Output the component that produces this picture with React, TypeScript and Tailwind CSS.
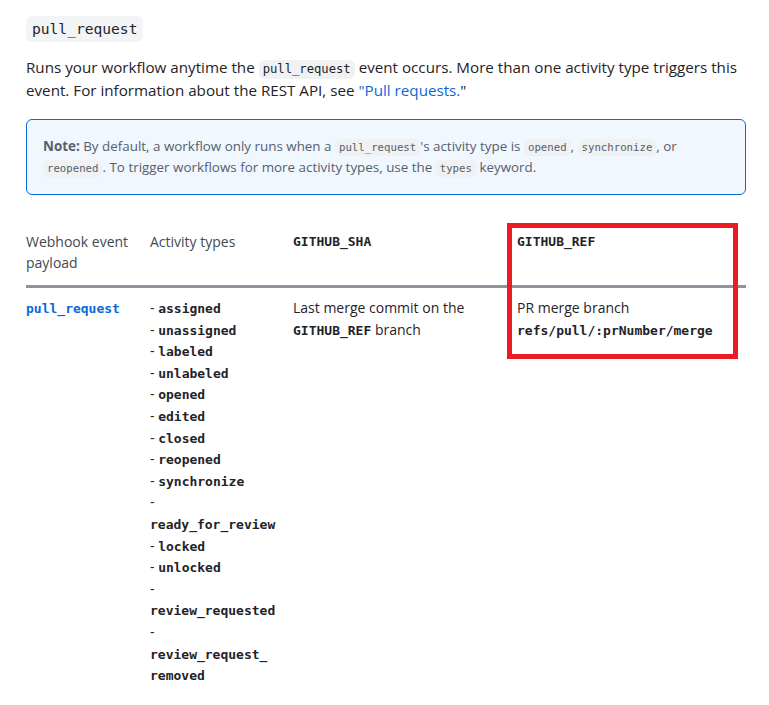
import React from 'react'

const mono = "font-['DejaVu_Sans_Mono',monospace]"

const Code = ({ children, className = '' }: { children: React.ReactNode; className?: string }) => (
  <code className={`${mono} inline-block rounded-[6px] bg-[#eff1f3] px-[4px] ${className}`}>{children}</code>
)

const activity: { name: string; split?: string[] }[] = [
  { name: 'assigned' },
  { name: 'unassigned' },
  { name: 'labeled' },
  { name: 'unlabeled' },
  { name: 'opened' },
  { name: 'edited' },
  { name: 'closed' },
  { name: 'reopened' },
  { name: 'synchronize' },
  { name: 'ready_for_review', split: ['ready_for_review'] },
  { name: 'locked' },
  { name: 'unlocked' },
  { name: 'review_requested', split: ['review_requested'] },
  { name: 'review_request_removed', split: ['review_request_', 'removed'] },
]

const Line = ({ children }: { children: React.ReactNode }) => (
  <div className="h-[21.6px] leading-[21.6px] whitespace-nowrap">{children}</div>
)

const Mono = ({ children, className = '' }: { children: React.ReactNode; className?: string }) => (
  <span className={`${mono} font-bold text-[13px] leading-[21.6px] ${className}`}>{children}</span>
)

export default function App() {
  return (
    <div className="relative w-[769px] h-[705px] bg-white font-['Open_Sans',sans-serif] text-[#1f2328] overflow-hidden">
      <div className="pl-[26px] pr-[23px] pt-[16px]">
        {/* event name */}
        <div className={`inline-block ${mono} text-[14.6px] h-[26px] leading-[26px] px-[6px] rounded-[6px] bg-[#f3f4f6]`}>
          pull_request
        </div>

        <p className="mt-[14px] text-[15.2px] leading-[22px]">
          Runs your workflow anytime the <Code className="text-[12.2px] leading-[19px]">pull_request</Code> event occurs. More
          than one activity type triggers this event. For information about the REST API, see{' '}
          <span className="text-[#0969da]">"Pull requests.</span>"
        </p>

        {/* note */}
        <div className="mt-[18px] h-[76px] rounded-[6px] border border-[#0969da] bg-[#f0f7ff] px-[16px] pt-[16px] text-[13.4px] leading-[21px] text-[#57606a]">
          <b className="font-bold">Note:</b> By default, a workflow only runs when a{' '}
          <Code className="text-[10.7px] leading-[17px] bg-[#e5e9ee]">pull_request</Code>'s activity type is{' '}
          <Code className="text-[10.7px] leading-[17px] bg-[#e5e9ee]">opened</Code>,{' '}
          <Code className="text-[10.7px] leading-[17px] bg-[#e5e9ee]">synchronize</Code>, or{' '}
          <Code className="text-[10.7px] leading-[17px] bg-[#e5e9ee]">reopened</Code>. To trigger workflows for more activity
          types, use the <Code className="text-[10.7px] leading-[17px] bg-[#e5e9ee]">types</Code> keyword.
        </div>

        {/* table */}
        <div className="mt-[26px]">
          <div className="grid grid-cols-[124px_143px_224px_229px] border-b-[3px] border-[#8c959f] pt-[10px] pb-[12px] text-[14px] leading-[21px]">
            <div className="text-[#424a53] pr-[16px]">Webhook event payload</div>
            <div className="text-[#424a53]">Activity types</div>
            <div className={`${mono} font-bold text-[13px]`}>GITHUB_SHA</div>
            <div className={`${mono} font-bold text-[13px]`}>GITHUB_REF</div>
          </div>
          <div className="grid grid-cols-[124px_143px_224px_229px] pt-[9px] text-[14px] leading-[21.6px]">
            <Line>
              <Mono className="text-[#0969da]">pull_request</Mono>
            </Line>
            <div>
              {activity.map((a) =>
                a.split ? (
                  <div key={a.name}>
                    <Line>-</Line>
                    {a.split.map((s) => (
                      <Line key={s}>
                        <Mono>{s}</Mono>
                      </Line>
                    ))}
                  </div>
                ) : (
                  <Line key={a.name}>
                    - <Mono>{a.name}</Mono>
                  </Line>
                )
              )}
            </div>
            <div className="pr-[16px]">
              <Line>Last merge commit on the</Line>
              <Line>
                <Mono>GITHUB_REF</Mono> branch
              </Line>
            </div>
            <div>
              <Line>PR merge branch</Line>
              <Line>
                <Mono>refs/pull/:prNumber/merge</Mono>
              </Line>
            </div>
          </div>
        </div>
      </div>

      {/* highlight annotation */}
      <div className="absolute left-[507px] top-[223px] w-[231px] h-[136px] border-[5px] border-[#ec1c24]" />
    </div>
  )
}
